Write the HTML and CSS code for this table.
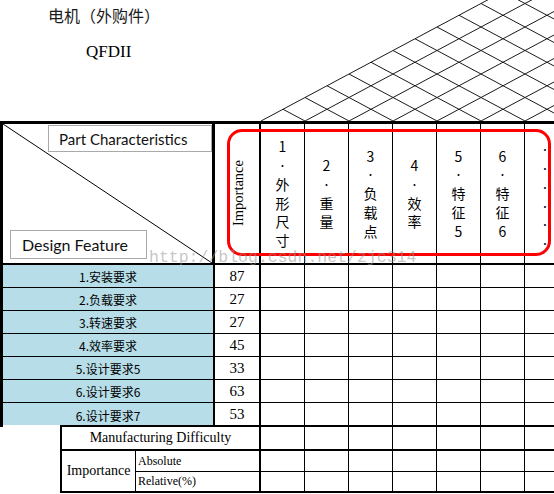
FILE: index.html
```html
<!DOCTYPE html>
<html lang="zh">
<head>
<meta charset="utf-8">
<title>QFDII</title>
<link rel="stylesheet" href="styles.css">
</head>
<body>
<div class="page">
  <header class="top">
    <div class="titles">
      <div class="title-cn">电机（外购件）</div>
      <div class="title-en">QFDII</div>
    </div>
    <svg class="roof" width="294" height="121" viewBox="0 0 294 121">
      <g stroke="#1a1a1a" stroke-width="1" fill="none">
        <line x1="0" y1="121" x2="264" y2="-20"/>
        <line x1="44" y1="121" x2="308" y2="-20"/>
        <line x1="88" y1="121" x2="352" y2="-20"/>
        <line x1="132" y1="121" x2="396" y2="-20"/>
        <line x1="176" y1="121" x2="440" y2="-20"/>
        <line x1="220" y1="121" x2="484" y2="-20"/>
        <line x1="264" y1="121" x2="528" y2="-20"/>
        <line x1="44" y1="121" x2="22" y2="109.25"/>
        <line x1="88" y1="121" x2="44" y2="97.5"/>
        <line x1="132" y1="121" x2="66" y2="85.75"/>
        <line x1="176" y1="121" x2="88" y2="74"/>
        <line x1="220" y1="121" x2="110" y2="62.25"/>
        <line x1="264" y1="121" x2="132" y2="50.5"/>
        <line x1="308" y1="121" x2="154" y2="38.75"/>
        <line x1="352" y1="121" x2="176" y2="27"/>
        <line x1="396" y1="121" x2="198" y2="15.25"/>
        <line x1="440" y1="121" x2="220" y2="3.5"/>
        <line x1="484" y1="121" x2="242" y2="-8.25"/>
      </g>
    </svg>
  </header>

  <div class="matrix">
    <!-- header row -->
    <div class="hl">
      <svg class="diag" viewBox="0 0 100 100" preserveAspectRatio="none">
        <line x1="0" y1="0" x2="100" y2="100" stroke="#000" stroke-width="1" vector-effect="non-scaling-stroke"/>
      </svg>
      <div class="lbl lbl-part">Part Characteristics</div>
      <div class="lbl lbl-design">Design Feature</div>
    </div>
    <div class="hi"><span class="vt">Importance</span></div>
    <div class="hc"><div class="stack"><span>1</span><span class="dot">.</span><span>外</span><span>形</span><span>尺</span><span>寸</span></div></div>
    <div class="hc"><div class="stack"><span>2</span><span class="dot">.</span><span>重</span><span>量</span></div></div>
    <div class="hc"><div class="stack"><span>3</span><span class="dot">.</span><span>负</span><span>载</span><span>点</span></div></div>
    <div class="hc"><div class="stack"><span>4</span><span class="dot">.</span><span>效</span><span>率</span></div></div>
    <div class="hc"><div class="stack"><span>5</span><span class="dot">.</span><span>特</span><span>征</span><span>5</span></div></div>
    <div class="hc"><div class="stack"><span>6</span><span class="dot">.</span><span>特</span><span>征</span><span>6</span></div></div>
    <div class="hc hc-last"><div class="stack"><span class="dot">.</span><span class="dot">.</span><span class="dot">.</span><span class="dot">.</span><span class="dot">.</span><span class="dot">.</span></div></div>

    <!-- data rows -->
    <div class="f">1.安装要求</div><div class="n">87</div>
    <div class="m"></div><div class="m"></div><div class="m"></div><div class="m"></div><div class="m"></div><div class="m"></div><div class="m"></div>

    <div class="f">2.负载要求</div><div class="n">27</div>
    <div class="m"></div><div class="m"></div><div class="m"></div><div class="m"></div><div class="m"></div><div class="m"></div><div class="m"></div>

    <div class="f">3.转速要求</div><div class="n">27</div>
    <div class="m"></div><div class="m"></div><div class="m"></div><div class="m"></div><div class="m"></div><div class="m"></div><div class="m"></div>

    <div class="f">4.效率要求</div><div class="n">45</div>
    <div class="m"></div><div class="m"></div><div class="m"></div><div class="m"></div><div class="m"></div><div class="m"></div><div class="m"></div>

    <div class="f">5.设计要求5</div><div class="n">33</div>
    <div class="m"></div><div class="m"></div><div class="m"></div><div class="m"></div><div class="m"></div><div class="m"></div><div class="m"></div>

    <div class="f">6.设计要求6</div><div class="n">63</div>
    <div class="m"></div><div class="m"></div><div class="m"></div><div class="m"></div><div class="m"></div><div class="m"></div><div class="m"></div>

    <div class="f f-last">6.设计要求7</div><div class="n b2">53</div>
    <div class="m b2"></div><div class="m b2"></div><div class="m b2"></div><div class="m b2"></div><div class="m b2"></div><div class="m b2"></div><div class="m b2"></div>

    <!-- bottom rows -->
    <div class="sp"></div>
    <div class="mfg">Manufacturing Difficulty</div>
    <div class="m b2"></div><div class="m b2"></div><div class="m b2"></div><div class="m b2"></div><div class="m b2"></div><div class="m b2"></div><div class="m b2"></div>

    <div class="il">Importance</div>
    <div class="ab">Absolute</div>
    <div class="m"></div><div class="m"></div><div class="m"></div><div class="m"></div><div class="m"></div><div class="m"></div><div class="m"></div>

    <div class="ab b2">Relative(%)</div>
    <div class="m b2"></div><div class="m b2"></div><div class="m b2"></div><div class="m b2"></div><div class="m b2"></div><div class="m b2"></div><div class="m b2"></div>

    <div class="highlight"></div>
    <div class="watermark">http://blog.csdn.net/zjc314</div>
  </div>
</div>
</body>
</html>
```

FILE: styles.css
```css
* { box-sizing: border-box; }
html, body { margin: 0; padding: 0; background: #fff; }
body { font-family: "Liberation Serif", "Times New Roman", serif; color: #000; }

.page { width: 554px; height: 494px; overflow: hidden; position: relative; }

/* ---------- top area ---------- */
.top { display: flex; height: 121px; }
.titles { width: 261px; flex: none; }
.title-cn {
  font-family: "Noto Sans CJK SC", sans-serif;
  font-size: 16px; line-height: 16px;
  margin: 7px 0 0 48px;
  color: #1a1a1a;
}
.title-en {
  font-size: 17px; line-height: 17px;
  margin: 20px 0 0 86px;
}
.roof { flex: none; display: block; }

/* ---------- matrix ---------- */
.matrix {
  position: relative;
  display: grid;
  width: 569px;
  grid-template-columns: 60px 76px 79px 46px repeat(7, 44px);
  grid-template-rows: 144px repeat(6, 23px) 24px 24px 21px 21px;
}

.hl {
  grid-column: span 3;
  position: relative;
  border: 3px solid #000;
  border-bottom-width: 2px;
  display: flex; flex-direction: column; justify-content: space-between;
  font-family: Lato, "Noto Sans", sans-serif;
}
.diag { position: absolute; inset: 0; width: 100%; height: 100%; }
.lbl {
  position: relative;
  background: #fff;
  border: 1px solid #a9a9a9;
  display: flex; align-items: center;
  color: #111;
}
.lbl-part {
  align-self: flex-end;
  width: 164px; height: 27px;
  margin-top: 1px;
  padding: 1px 0 0 10px;
  font-size: 15px;
}
.lbl-design {
  align-self: flex-start;
  width: 137px; height: 29px;
  margin: 0 0 4px 7px;
  padding-left: 11px;
  font-size: 16px;
}

.hi {
  border-top: 3px solid #000;
  border-right: 2px solid #000;
  border-bottom: 2px solid #000;
  display: flex; align-items: center; justify-content: center;
  padding-left: 3px;
}
.vt {
  writing-mode: vertical-rl;
  transform: rotate(180deg);
  font-size: 14.5px;
  line-height: 1;
}

.hc {
  border-top: 3px solid #000;
  border-right: 1px solid #000;
  border-bottom: 2px solid #000;
  display: flex; align-items: center; justify-content: center;
  font-family: "Noto Sans CJK SC", sans-serif;
  font-size: 14px;
  text-align: center;
}
.stack { display: flex; flex-direction: column; align-items: center; }
.stack > span { display: block; height: 18.7px; line-height: 18.7px; }
.stack > .dot { line-height: 11px; padding-bottom: 7.7px; }
.hc-last .stack { margin-top: 6px; margin-right: 3px; }

.f {
  grid-column: span 3;
  background: #b7dee8;
  border-left: 3px solid #000;
  border-right: 2px solid #000;
  border-bottom: 1px solid #000;
  display: flex; align-items: center; justify-content: center;
  font-family: "Noto Sans CJK SC", sans-serif;
  font-size: 12px;
}
.f-last {
  border-bottom: none;
  background:
    linear-gradient(#000, #000) right bottom / calc(100% - 57px) 2px no-repeat,
    linear-gradient(#fff, #fff) left bottom / 100% 2px no-repeat,
    #b7dee8;
}
.n {
  border-right: 2px solid #000;
  border-bottom: 1px solid #000;
  display: flex; align-items: center; justify-content: center;
  font-size: 15px;
}
.m {
  border-right: 1px solid #000;
  border-bottom: 1px solid #000;
}
.b2 { border-bottom-width: 2px; }

.sp { grid-column: 1; grid-row: span 3; }
.mfg {
  grid-column: span 3;
  border-left: 2px solid #000;
  border-right: 2px solid #000;
  border-bottom: 2px solid #000;
  display: flex; align-items: center; justify-content: center;
  font-size: 14px;
}
.il {
  grid-row: span 2;
  border-left: 2px solid #000;
  border-right: 1px solid #000;
  border-bottom: 2px solid #000;
  display: flex; align-items: center; justify-content: center;
  font-size: 14px;
}
.ab {
  grid-column: span 2;
  border-right: 2px solid #000;
  border-bottom: 1px solid #000;
  display: flex; align-items: center;
  padding-left: 2px;
  font-size: 12px;
}
.ab.b2 { border-bottom-width: 2px; }

.highlight {
  position: absolute;
  left: 227px; top: 8px;
  width: 324px; height: 127px;
  border: 3px solid #ff0000;
  border-radius: 15px;
}
.watermark {
  position: absolute;
  left: 149px; top: 129px;
  font-family: "Liberation Mono", "Courier New", monospace;
  font-size: 16.5px; line-height: 16.5px;
  color: rgba(150, 150, 150, 0.55);
  white-space: nowrap;
}
```
